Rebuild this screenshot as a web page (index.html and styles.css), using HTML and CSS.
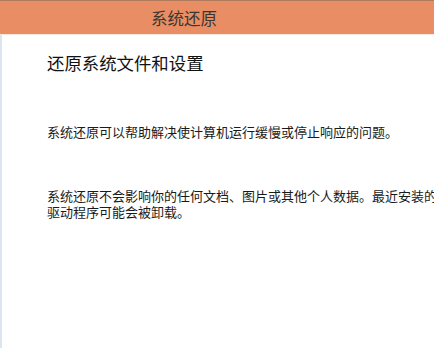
FILE: index.html
```html
<!DOCTYPE html>
<html lang="zh-CN">
<head>
<meta charset="utf-8">
<title>系统还原</title>
<link rel="stylesheet" href="styles.css">
</head>
<body>
<div class="window">
  <div class="topline"></div>
  <header class="titlebar"><span class="title">系统还原</span></header>
  <div class="sep"></div>
  <main class="content">
    <h1 class="heading">还原系统文件和设置</h1>
    <p class="desc first">系统还原可以帮助解决使计算机运行缓慢或停止响应的问题。</p>
    <p class="desc second">系统还原不会影响你的任何文档、图片或其他个人数据。最近安装的程序和驱动程序可能会被卸载。</p>
  </main>
</div>
</body>
</html>
```
FILE: styles.css
```css
html, body {
  margin: 0;
  padding: 0;
  width: 434px;
  height: 348px;
  overflow: hidden;
  background: #ffffff;
}
.window {
  display: flex;
  flex-direction: column;
  height: 348px;
  font-family: "Noto Sans CJK SC", "Noto Sans", sans-serif;
}
.topline {
  height: 1px;
  background: #b07a5c;
}
.titlebar {
  height: 33px;
  background: #e98e64;
  display: flex;
  align-items: center;
  padding-left: 151px;
}
.title {
  font-size: 16.5px;
  color: #3a3633;
  line-height: 20px;
}
.sep {
  height: 1px;
  background: #fbe8de;
}
.content {
  flex: 1;
  border-left: 2px solid #dbe5f2;
  padding-left: 45px;
  overflow: hidden;
}
.heading {
  margin: 16px 0 0 0;
  font-size: 17.4px;
  font-weight: normal;
  line-height: 24px;
  color: #111;
}
.desc {
  margin: 0;
  font-size: 13px;
  line-height: 16.5px;
  color: #1a1a1a;
  width: 436px;
}
.first {
  margin-top: 49px;
}
.second {
  margin-top: 47px;
}
```
